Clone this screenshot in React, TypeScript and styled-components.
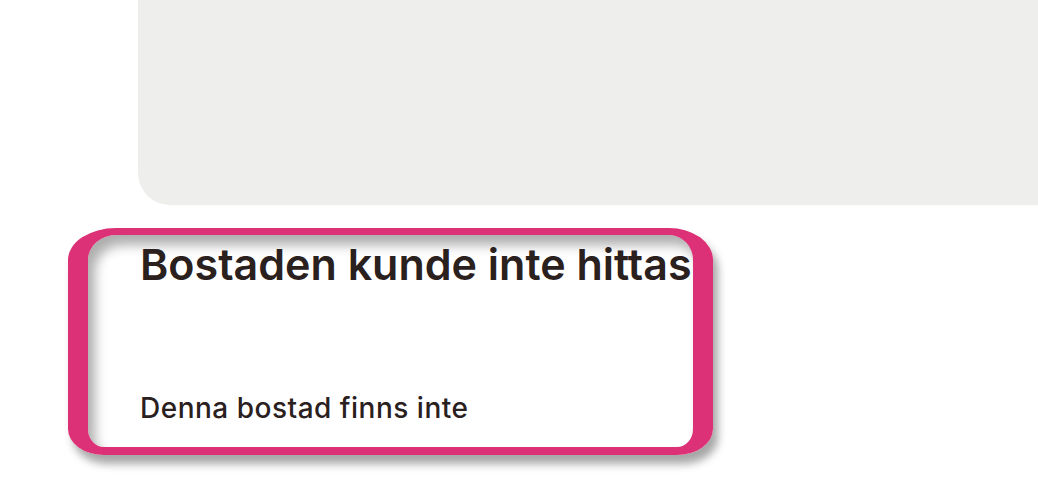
import React from "react";
import styled, { createGlobalStyle } from "styled-components";

const Global = createGlobalStyle`
  html, body { margin: 0; padding: 0; background: #ffffff; }
  body { font-family: Inter, "Noto Sans", sans-serif; color: #2a201d; }
  *, *::before, *::after { box-sizing: border-box; }
`;

const Page = styled.div`
  display: flex;
  flex-direction: column;
  width: 1038px;
  height: 484px;
  overflow: hidden;
`;

const HeroPanel = styled.div`
  margin-left: 138px;
  height: 205px;
  background: #eeeeec;
  border-bottom-left-radius: 32px;
`;

const Highlight = styled.section`
  margin-left: 68px;
  margin-top: 23px;
  width: 645px;
  height: 227px;
  border-style: solid;
  border-color: #dc3177;
  border-width: 7px 20px 8px 20px;
  border-radius: 48px 44px 36px 36px / 32px 32px 26px 26px;
  box-shadow: 5px 9px 9px rgba(0, 0, 0, 0.35),
    inset 7px 10px 12px rgba(0, 0, 0, 0.32);
  display: flex;
  flex-direction: column;
  padding: 3px 0 0 52px;
`;

const Title = styled.h1`
  margin: 0;
  font-family: Inter, "Noto Sans", sans-serif;
  font-size: 43px;
  line-height: 52px;
  font-weight: 600;
  letter-spacing: 0;
  color: #2a201d;
  white-space: nowrap;
`;

const Message = styled.p`
  margin: 101px 0 0 0;
  font-family: Inter, "Noto Sans", sans-serif;
  font-size: 28px;
  line-height: 34px;
  font-weight: 500;
  letter-spacing: 0.5px;
  color: #2a201d;
  white-space: nowrap;
`;

export default function App() {
  return (
    <>
      <Global />
      <Page>
        <HeroPanel />
        <Highlight>
          <Title>Bostaden kunde inte hittas</Title>
          <Message>Denna bostad finns inte</Message>
        </Highlight>
      </Page>
    </>
  );
}
